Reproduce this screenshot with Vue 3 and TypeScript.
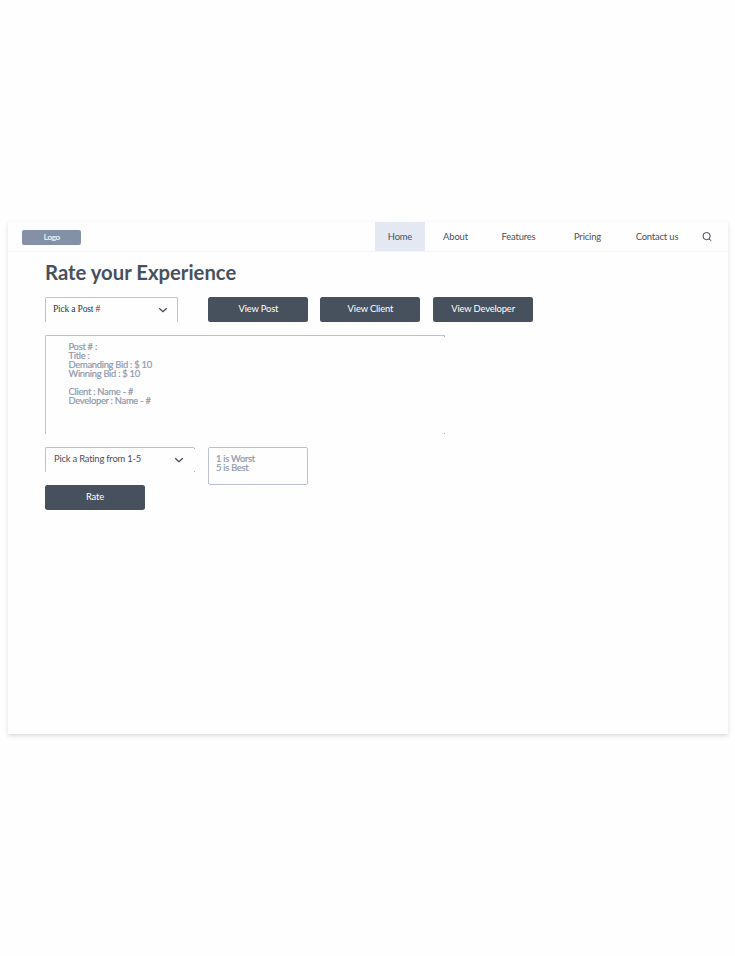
<script setup lang="ts">
interface NavItem {
  label: string
  kind: string
}

const navItems: NavItem[] = [
  { label: 'Home', kind: 'home' },
  { label: 'About', kind: 'about' },
  { label: 'Features', kind: 'features' },
  { label: 'Pricing', kind: 'pricing' },
  { label: 'Contact us', kind: 'contact' },
]
const views: string[] = ['View Post', 'View Client', 'View Developer']
const details: string[] = ['Post # :', 'Title :', 'Demanding Bid : $ 10', 'Winning Bid : $ 10', '', 'Client : Name - #', 'Developer : Name - #']
</script>

<template>
  <main class="page">
    <section class="window">
      <header class="bar">
        <div class="logo">Logo</div>
        <nav class="nav">
          <a v-for="item in navItems" :key="item.kind" class="link" :class="item.kind"><span>{{ item.label }}</span></a>
        </nav>
        <svg class="search" viewBox="0 0 10 10">
          <circle cx="4.6" cy="4.1" r="3.6" />
          <path d="M7 7L9.4 8.8" />
        </svg>
      </header>
      <div class="content">
        <h1 class="title">Rate your Experience</h1>
        <div class="row">
          <div class="select post">
            <span>Pick a Post #</span>
            <svg class="chevron" viewBox="0 0 10 6"><path d="M1.2 1.2L5 4.7L8.8 1.2" /></svg>
          </div>
          <div class="views">
            <button v-for="view in views" :key="view" class="btn">{{ view }}</button>
          </div>
        </div>
        <div class="panel">
          <i class="dot top"></i>
          <i class="dot bottom"></i>
          <p v-for="(line, i) in details" :key="i">{{ line }}</p>
        </div>
        <div class="row rating-row">
          <div class="select rating">
            <span>Pick a Rating from 1-5</span>
            <svg class="chevron" viewBox="0 0 10 6"><path d="M1.2 1.2L5 4.7L8.8 1.2" /></svg>
            <i class="dot top"></i>
            <i class="dot bottom"></i>
          </div>
          <div class="hint">
            <p>1 is Worst</p>
            <p>5 is Best</p>
          </div>
        </div>
        <button class="btn rate">Rate</button>
      </div>
    </section>
  </main>
</template>

<style>
body {
  background: #fefefe;
}
</style>

<style scoped>
.page {
  box-sizing: border-box;
  height: 956px;
  padding: 222px 7px 0 8px;
  font-family: Lato, sans-serif;
  color: #47515d;
}
.window {
  height: 512px;
  background: #fefefe;
  box-shadow: 0 2px 4px rgba(71, 90, 110, 0.2);
}
.bar {
  box-sizing: border-box;
  display: flex;
  align-items: center;
  height: 30px;
  padding-left: 14.4px;
  border-bottom: 1px solid #f4f5f7;
}
.logo {
  width: 59px;
  height: 15px;
  margin-top: 1px;
  margin-right: 293.6px;
  border-radius: 2px;
  background: #8490a6;
  color: #f0f2f6;
  font-size: 8px;
  line-height: 14px;
  letter-spacing: -0.2px;
  text-align: center;
  -webkit-text-stroke: 0.2px #f0f2f6;
}
.nav {
  display: flex;
  height: 29px;
}
.link {
  display: flex;
  justify-content: center;
  font-size: 9.4px;
  line-height: 30px;
  letter-spacing: -0.15px;
  white-space: nowrap;
}
.home {
  width: 50px;
  background: #e4e8f2;
}
.about {
  width: 61px;
}
.features {
  width: 65px;
}
.pricing {
  width: 73px;
}
.contact {
  width: 66px;
}
.search {
  width: 10px;
  height: 10px;
  margin-left: 12px;
  fill: none;
  stroke: #3f4854;
  stroke-width: 1;
}
.content {
  padding: 8px 0 0 37px;
}
.title {
  margin: 0;
  height: 37px;
  font-size: 20.3px;
  line-height: 24px;
  font-weight: 700;
  white-space: nowrap;
}
.row {
  display: flex;
  align-items: flex-start;
}
.select {
  position: relative;
  box-sizing: border-box;
  display: flex;
  align-items: center;
  justify-content: space-between;
  height: 26px;
  border: 1px solid #bcc2d0;
  border-bottom-color: transparent;
  border-radius: 2px;
  font-size: 9.4px;
  line-height: 22px;
  letter-spacing: -0.2px;
  white-space: nowrap;
}
.select span {
  margin-top: -2px;
}
.post {
  width: 133px;
  padding: 0 9px 0 7px;
  font-family: "Liberation Serif", serif;
  font-size: 9.6px;
  letter-spacing: -0.22px;
  color: #303844;
}
.chevron {
  width: 10px;
  height: 6px;
  margin-top: -1px;
  fill: none;
  stroke: #3f4854;
  stroke-width: 1.3;
}
.views {
  display: flex;
  gap: 12px;
  margin-left: 30.4px;
}
.views .btn:last-child {
  margin-left: 0.7px;
}
.btn {
  width: 100px;
  height: 25px;
  padding: 0 0 1px;
  border: 0;
  border-radius: 2.5px;
  background: #47515d;
  color: #fff;
  font-family: Lato, sans-serif;
  font-size: 9.4px;
  line-height: 24px;
  letter-spacing: -0.15px;
}
.panel {
  position: relative;
  box-sizing: border-box;
  width: 400px;
  height: 100px;
  margin-top: 12px;
  padding: 6px 0 0 22.5px;
  border: 1px solid #bcc2d0;
  border-right: 0;
  border-bottom-color: transparent;
  border-radius: 2px 0 0 2px;
}
.panel p,
.hint p {
  height: 9px;
  margin: 0;
  color: #8e9aae;
  font-size: 9.4px;
  line-height: 9px;
  letter-spacing: -0.28px;
  white-space: nowrap;
  -webkit-text-stroke: 0.2px #8e9aae;
}
.dot {
  position: absolute;
  right: 0;
  width: 1px;
  height: 1px;
  background: #aeb5c2;
}
.dot.top {
  top: 0;
}
.dot.bottom {
  bottom: 0;
}
.rating-row {
  height: 38px;
  margin-top: 12px;
}
.rating {
  width: 150px;
  padding: 0 11px 0 8px;
  border-right: 0;
}
.hint {
  box-sizing: border-box;
  width: 100px;
  height: 38px;
  margin-left: 13px;
  padding: 6px 0 0 7px;
  border: 1px solid #bcc2d0;
  border-radius: 2px;
}
.rate {
  display: block;
}
</style>
